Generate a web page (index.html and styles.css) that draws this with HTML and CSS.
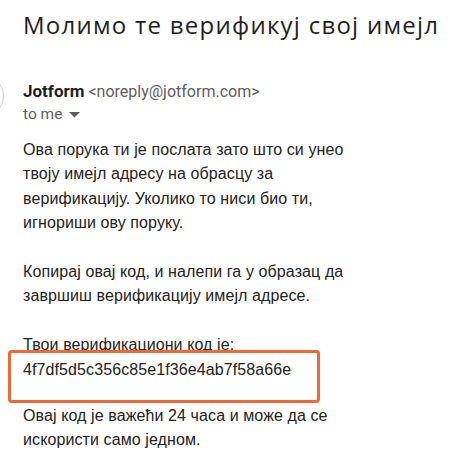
FILE: index.html
```html
<!DOCTYPE html>
<html>
<head>
<meta charset="utf-8">
<link rel="stylesheet" href="styles.css">
</head>
<body>
<div class="page">
  <h1 class="title">Молимо те верификуј свој имејл</h1>
  <div class="header">
    <div class="avatar"></div>
    <div class="meta">
      <div class="from"><span class="name">Jotform</span> <span class="addr">&lt;noreply@jotform.com&gt;</span></div>
      <div class="to">to me <svg class="caret" width="11" height="6" viewBox="0 0 11 6"><path d="M0 0 L11 0 L5.5 5.5 Z" fill="#5e5e5e"/></svg></div>
    </div>
  </div>
  <div class="body">
    <p>Ова порука ти је послата зато што си унео твоју имејл адресу на обрасцу за верификацију. Уколико то ниси био ти, игнориши ову поруку.</p>
    <p>Копирај овај код, и налепи га у образац да завршиш верификацију имејл адресе.</p>
    <p class="code-para">Твои верификациони код је:<br><span class="code">4f7df5d5c356c85e1f36e4ab7f58a66e</span></p>
    <p>Овај код је важећи 24 часа и може да се искористи само једном.</p>
  </div>
</div>
</body>
</html>
```
FILE: styles.css
```css
html, body { margin: 0; padding: 0; background: #fff; }
.page { padding: 0 0 0 23px; width: 420px; }
.title {
  margin: 0;
  padding-top: 7px;
  font-family: "Open Sans", sans-serif;
  font-weight: 400;
  font-size: 24px;
  letter-spacing: 1.25px;
  line-height: 36px;
  color: #1f1f1f;
  white-space: nowrap;
}
.header { display: flex; align-items: flex-start; margin-top: 37px; }
.avatar {
  width: 40px; height: 40px; border-radius: 50%;
  border: 1px solid #cfcfcf; box-sizing: border-box;
  margin-left: -59px; margin-right: 19px; margin-top: -4px;
  flex: none;
}
.meta { font-family: Roboto, sans-serif; }
.from { font-size: 16px; line-height: 22px; color: #1f1f1f; }
.name { font-weight: 700; font-size: 17px; }
.addr { font-size: 16px; color: #5e5e5e; }
.to { font-size: 15.5px; line-height: 22px; color: #5e5e5e; display: flex; align-items: center; gap: 7px; }
.caret { margin-top: 1px; }
.body {
  font-family: "Liberation Sans", Arial, sans-serif;
  font-size: 16px;
  letter-spacing: 0.1px;
  line-height: 24.4px;
  color: #222;
  margin-top: 13px;
  width: 340px;
}
.body p { margin: 0 0 24.4px 0; }
.body p.code-para { margin-bottom: 22px; }
.code { position: relative; display: inline-block; }
.code::before {
  content: "";
  position: absolute;
  left: -15px; top: -8px; width: 312px; height: 53px;
  border: 3px solid #ee6a34;
  border-radius: 4px;
  box-sizing: border-box;
}
```
